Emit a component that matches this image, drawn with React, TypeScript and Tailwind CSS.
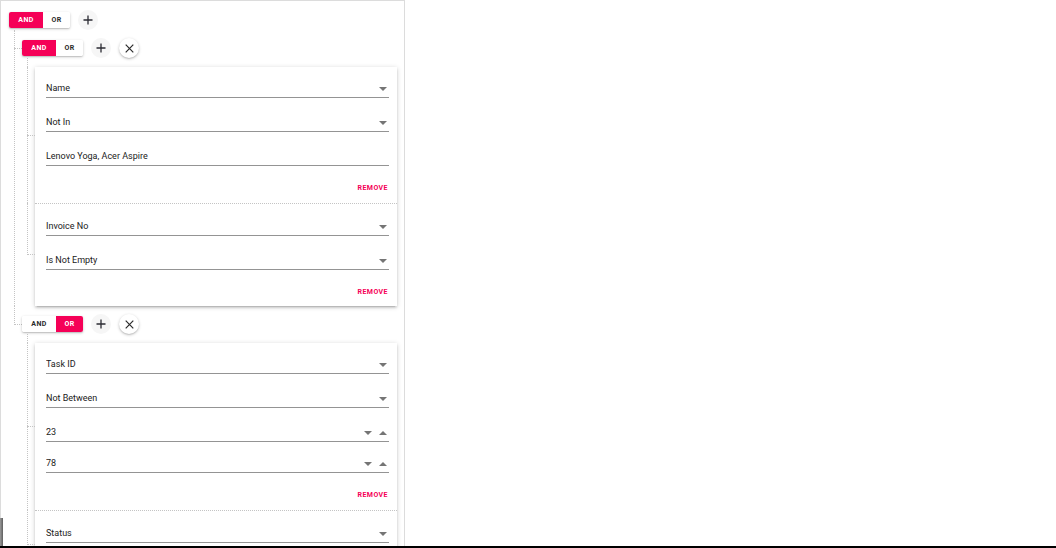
import React from 'react';

type FieldKind = 'select' | 'text' | 'number';

interface FieldDef {
  label: string;
  kind: FieldKind;
  tight?: boolean;
}

interface RuleDef {
  fields: FieldDef[];
}

interface GroupDef {
  combinator: 'AND' | 'OR';
  rules: RuleDef[];
}

const groups: GroupDef[] = [
  {
    combinator: 'AND',
    rules: [
      {
        fields: [
          { label: 'Name', kind: 'select' },
          { label: 'Not In', kind: 'select' },
          { label: 'Lenovo Yoga, Acer Aspire', kind: 'text' },
        ],
      },
      {
        fields: [
          { label: 'Invoice No', kind: 'select' },
          { label: 'Is Not Empty', kind: 'select' },
        ],
      },
    ],
  },
  {
    combinator: 'OR',
    rules: [
      {
        fields: [
          { label: 'Task ID', kind: 'select' },
          { label: 'Not Between', kind: 'select' },
          { label: '23', kind: 'number' },
          { label: '78', kind: 'number', tight: true },
        ],
      },
      {
        fields: [{ label: 'Status', kind: 'select' }],
      },
    ],
  },
];

// grid rows for the rules of a group (row 1 is the short rail above the card)
const ruleRows = ['row-start-2', 'row-start-3'];

const dotted = 'border-dotted border-[#c4c4c4]';

const CaretDown = () => (
  <svg width="8" height="4" viewBox="0 0 8 4" className="shrink-0">
    <path d="M0 0 L8 0 L4 4 Z" fill="#757575" />
  </svg>
);

const CaretUp = () => (
  <svg width="8" height="4" viewBox="0 0 8 4" className="shrink-0">
    <path d="M0 4 L8 4 L4 0 Z" fill="#757575" />
  </svg>
);

const PlusIcon = () => (
  <svg width="10" height="10" viewBox="0 0 10 10">
    <path d="M5 0.5 V9.5 M0.5 5 H9.5" stroke="#2b2b33" strokeWidth="1.3" />
  </svg>
);

const CloseIcon = () => (
  <svg width="9" height="9" viewBox="0 0 9 9">
    <path d="M0.7 0.7 L8.3 8.3 M8.3 0.7 L0.7 8.3" stroke="#2b2b2b" strokeWidth="1.2" />
  </svg>
);

const Toggle: React.FC<{ value: 'AND' | 'OR' }> = ({ value }) => {
  const on = 'bg-[#f50057] text-white';
  const off = 'bg-white text-[#2a2a2a]';
  return (
    <div className="flex h-[16px] overflow-hidden rounded-[2px] shadow-[0_1px_3px_rgba(0,0,0,0.22),0_1px_1px_rgba(0,0,0,0.1)]">
      <div className={`flex w-[34px] items-center justify-center text-[7px] font-bold tracking-[0.4px] ${value === 'AND' ? on : off}`}>
        AND
      </div>
      <div className={`flex w-[27px] items-center justify-center text-[7px] font-bold tracking-[0.4px] ${value === 'OR' ? on : off}`}>
        OR
      </div>
    </div>
  );
};

const ActionRow: React.FC<{ value: 'AND' | 'OR'; removable?: boolean }> = ({ value, removable }) => (
  <div className="flex h-[20px] items-center gap-[8px]">
    <Toggle value={value} />
    <div className="flex h-[20px] w-[20px] items-center justify-center rounded-full bg-[#f6f6f6]">
      <PlusIcon />
    </div>
    {removable && (
      <div className="flex h-[20px] w-[20px] items-center justify-center rounded-full bg-white shadow-[0_1px_3px_rgba(0,0,0,0.25),0_1px_1px_rgba(0,0,0,0.08)]">
        <CloseIcon />
      </div>
    )}
  </div>
);

const Field: React.FC<{ field: FieldDef; first: boolean }> = ({ field, first }) => {
  const mt = first ? '' : field.tight ? 'mt-[13px]' : 'mt-[16px]';
  return (
    <div className={`${mt} flex h-[18px] items-center border-b border-[#949494] pr-[2px]`}>
      <span className="flex-1 truncate text-[9px] text-[#212121]">{field.label}</span>
      {field.kind === 'select' && <CaretDown />}
      {field.kind === 'number' && (
        <div className="flex items-center gap-[7px]">
          <CaretDown />
          <CaretUp />
        </div>
      )}
    </div>
  );
};

const Rule: React.FC<{ rule: RuleDef; first: boolean; row: string }> = ({ rule, first, row }) => (
  <div className={`col-start-2 ${row} flex flex-col pl-[11px] pr-[8px] ${first ? 'pt-[13px] pb-[9px]' : `pt-[14px] pb-[8px] border-t ${dotted}`}`}>
    {rule.fields.map((f, i) => (
      <Field key={f.label} field={f} first={i === 0} />
    ))}
    <div className="mt-[16px] flex h-[12px] items-center justify-end pr-[1px]">
      <span className="text-[7px] font-bold tracking-[0.45px] text-[#f50057]">REMOVE</span>
    </div>
  </div>
);

// connector rail for one rule: line runs down the left, branches at the middle
const RuleRail: React.FC<{ last: boolean; row: string }> = ({ last, row }) => (
  <div className={`col-start-1 ${row} flex flex-col`}>
    {last ? (
      <>
        <div className={`flex-1 border-l border-b ${dotted}`} />
        <div className="flex-1" />
      </>
    ) : (
      <>
        <div className={`flex-1 border-l ${dotted}`} />
        <div className={`flex-1 border-l border-t ${dotted}`} />
      </>
    )}
  </div>
);

const Group: React.FC<{ group: GroupDef }> = ({ group }) => (
  <div className="flex flex-col pt-[8px]">
    <ActionRow value={group.combinator} removable />
    <div className="ml-[5px] grid grid-cols-[8px_1fr]">
      <div className={`col-start-1 row-start-1 h-[9px] border-l ${dotted}`} />
      <div className="col-start-2 row-start-2 row-span-2 bg-white shadow-[0_1px_5px_rgba(0,0,0,0.18),0_2px_2px_rgba(0,0,0,0.1),0_3px_1px_-2px_rgba(0,0,0,0.1)]" />
      {group.rules.map((r, i) => (
        <React.Fragment key={i}>
          <RuleRail last={i === group.rules.length - 1} row={ruleRows[i]} />
          <Rule rule={r} first={i === 0} row={ruleRows[i]} />
        </React.Fragment>
      ))}
    </div>
  </div>
);

export default function App() {
  return (
    <div className="relative flex h-[548px] w-[1056px] flex-col bg-white font-['Roboto',sans-serif]">
      <div className="h-[546px] w-[405px] overflow-hidden border border-b-0 border-[#dcdcdc] pl-[8px] pr-[7px] pt-[9px]">
        <ActionRow value="AND" />
        <div className="ml-[5px] flex flex-col">
          {groups.map((g, i) => {
            const last = i === groups.length - 1;
            return (
              <div key={i} className="flex">
                <div className="flex w-[8px] shrink-0 flex-col">
                  {last ? (
                    <div className={`h-[19px] border-l border-b ${dotted}`} />
                  ) : (
                    <>
                      <div className={`h-[18px] border-l ${dotted}`} />
                      <div className={`flex-1 border-l border-t ${dotted}`} />
                    </>
                  )}
                </div>
                <div className="min-w-0 flex-1">
                  <Group group={g} />
                </div>
              </div>
            );
          })}
        </div>
      </div>
      <div className="h-[2px] w-full bg-black" />
      {/* scrollbar stub at the lower-left corner */}
      <div className="absolute bottom-[2px] left-0 h-[28px] w-[3px] bg-gradient-to-r from-[#9a9a9a] to-[#5f5f5f]" />
    </div>
  );
}
